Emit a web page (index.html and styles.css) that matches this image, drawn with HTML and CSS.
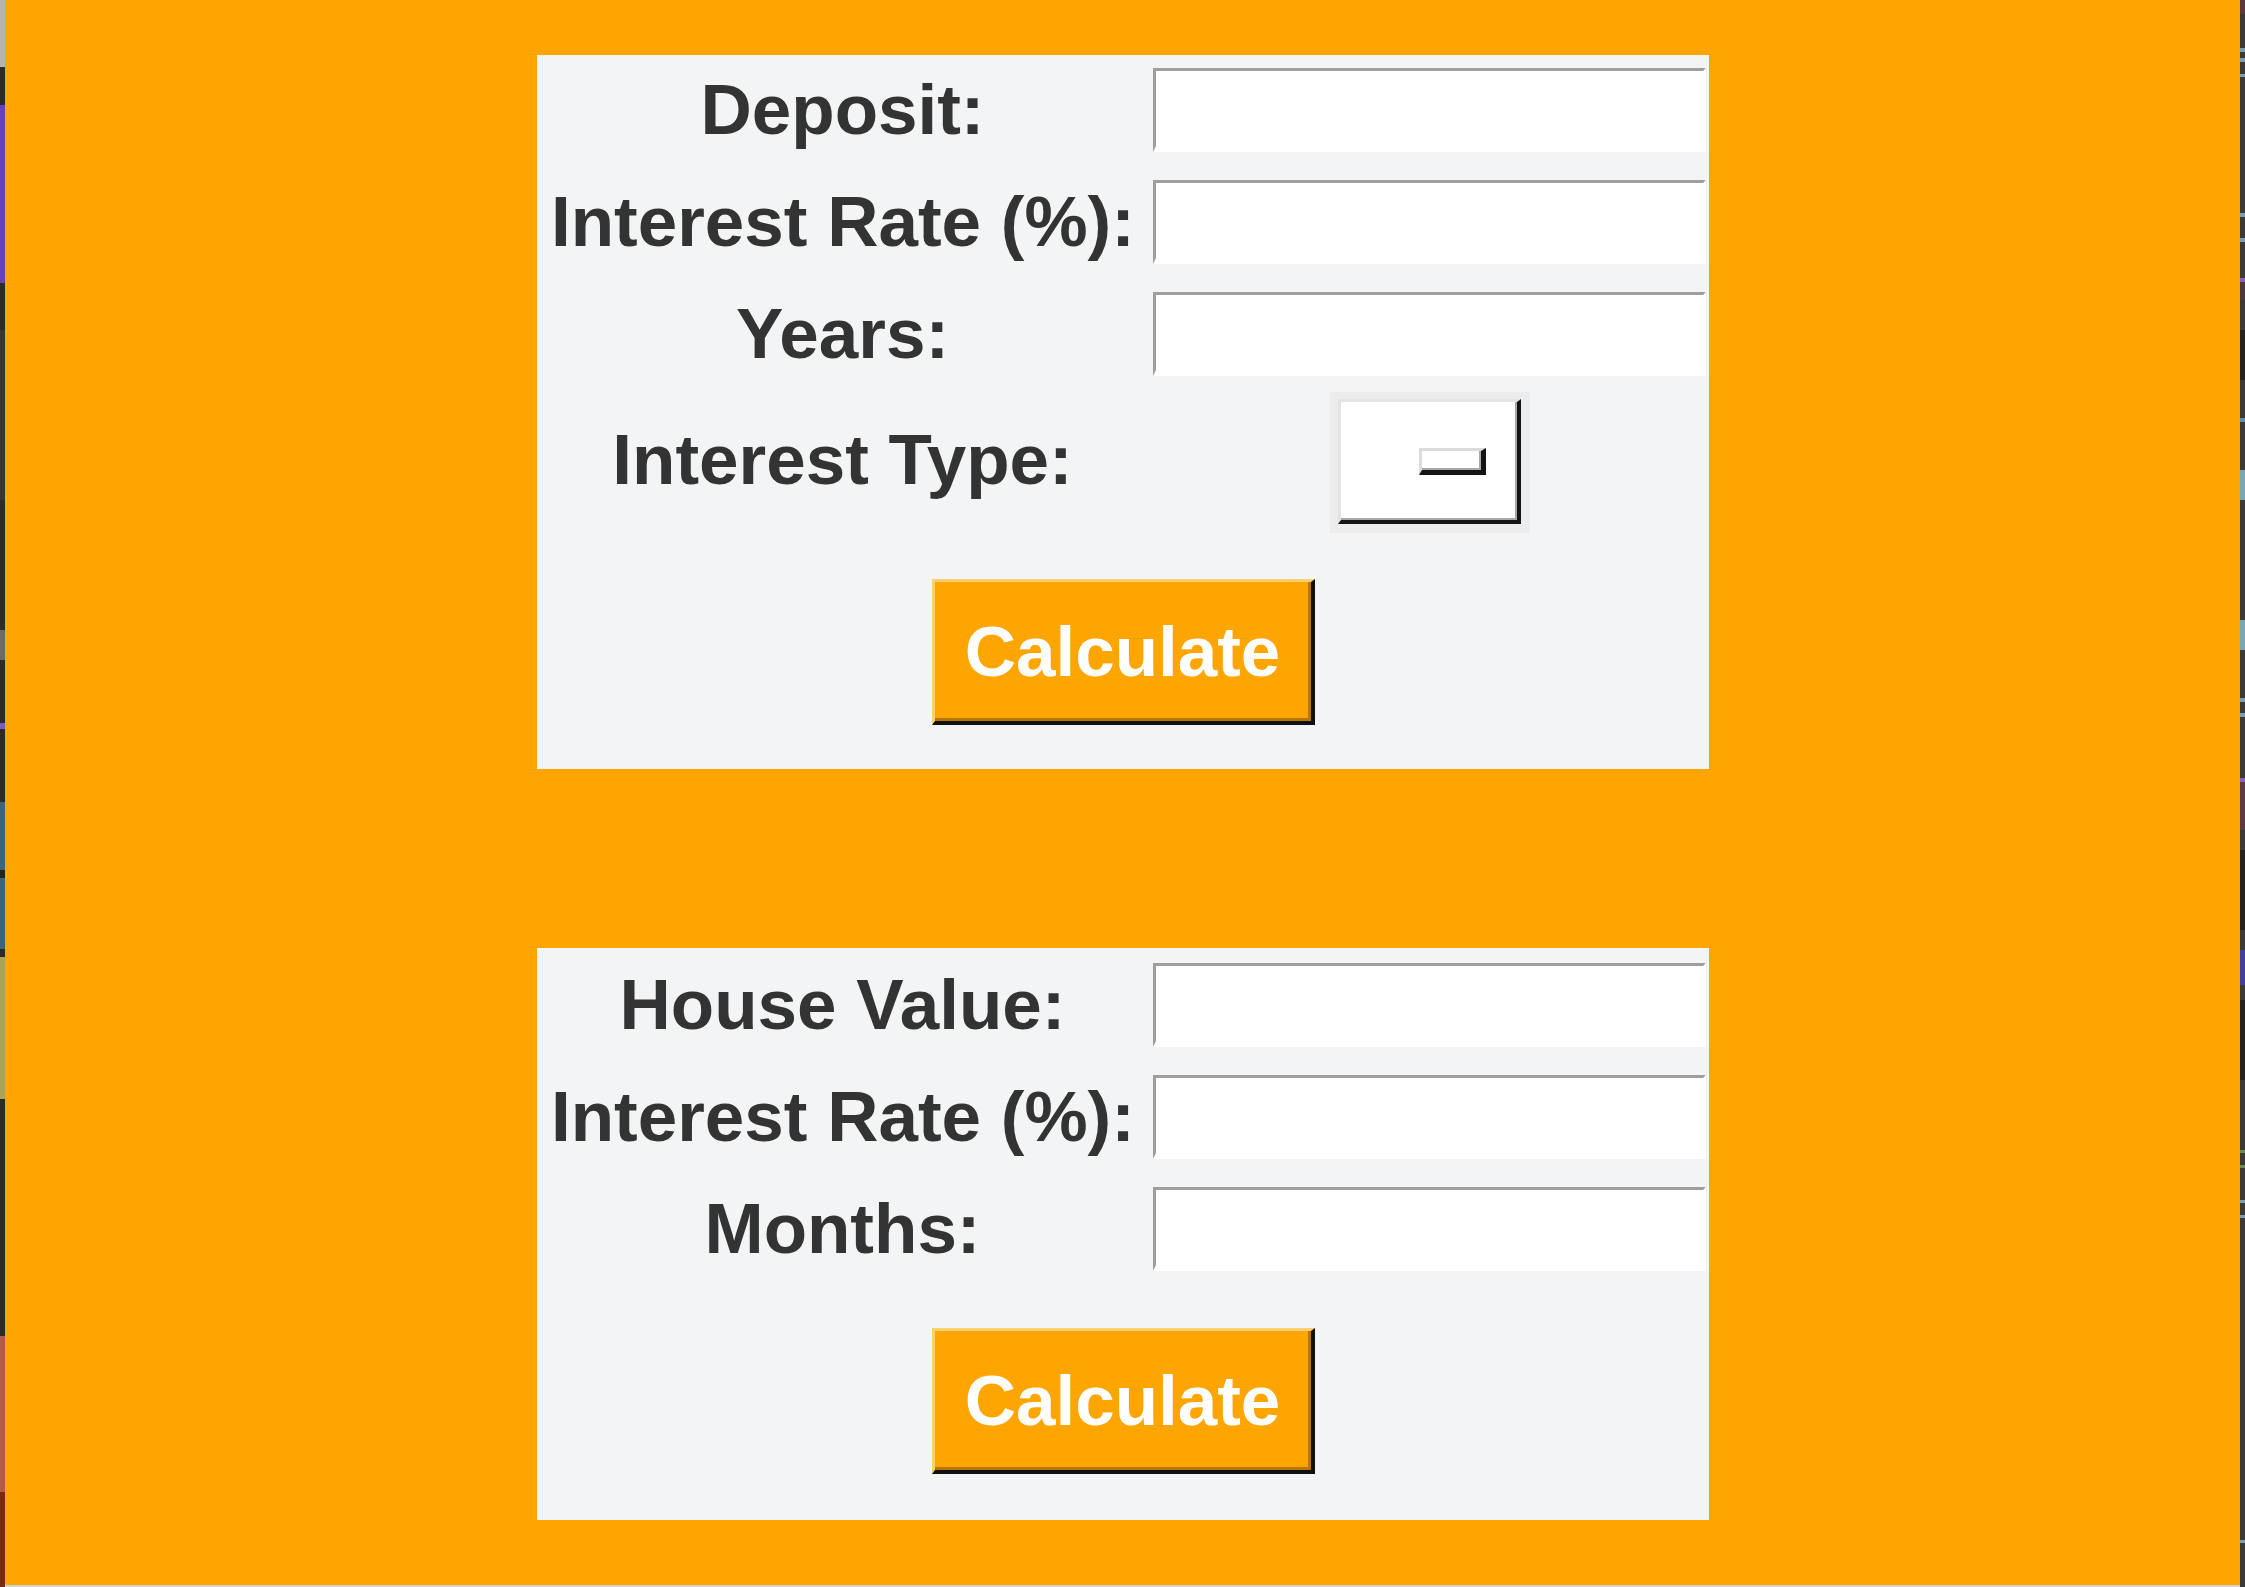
FILE: index.html
```html
<!DOCTYPE html>
<html lang="en">
<head>
<meta charset="utf-8">
<title>Calculator</title>
<link rel="stylesheet" href="styles.css">
</head>
<body>
<div class="window">
  <div class="edge edge-left"></div>
  <main class="content">
    <section class="panel panel-savings">
      <div class="field">
        <label class="label" for="deposit">Deposit:</label>
        <input class="entry" id="deposit" type="text">
      </div>
      <div class="field">
        <label class="label" for="rate1">Interest Rate (%):</label>
        <input class="entry" id="rate1" type="text">
      </div>
      <div class="field">
        <label class="label" for="years">Years:</label>
        <input class="entry" id="years" type="text">
      </div>
      <div class="field field-type">
        <span class="label label-type">Interest Type:</span>
        <div class="option-wrap">
          <div class="option"><span class="indicator"></span></div>
        </div>
      </div>
      <div class="actions">
        <button class="calc" type="button">Calculate</button>
      </div>
    </section>

    <section class="panel panel-mortgage">
      <div class="field">
        <label class="label" for="house">House Value:</label>
        <input class="entry" id="house" type="text">
      </div>
      <div class="field">
        <label class="label" for="rate2">Interest Rate (%):</label>
        <input class="entry" id="rate2" type="text">
      </div>
      <div class="field">
        <label class="label" for="months">Months:</label>
        <input class="entry" id="months" type="text">
      </div>
      <div class="actions">
        <button class="calc" type="button">Calculate</button>
      </div>
    </section>
  </main>
  <div class="edge edge-right"></div>
</div>
</body>
</html>
```

FILE: styles.css
```css
html, body {
  margin: 0;
  padding: 0;
}

body {
  width: 2245px;
  height: 1587px;
  overflow: hidden;
  background: #ffa500;
  font-family: "Liberation Sans", Arial, Helvetica, sans-serif;
}

.window {
  display: flex;
  width: 2245px;
  height: 1587px;
}

.edge {
  width: 5px;
  flex: 0 0 5px;
  height: 1587px;
}

.edge-left {
  background: linear-gradient(to bottom,
    #b4b4b4 0px, #b4b4b4 67px,
    #2b2b2b 67px, #2b2b2b 105px,
    #6b3fb5 105px, #6b3fb5 283px,
    #2b2b2b 283px, #2b2b2b 330px,
    #363636 330px, #363636 500px,
    #2b2b2b 500px, #2b2b2b 630px,
    #6a6a6a 630px, #6a6a6a 660px,
    #2b2b2b 660px, #2b2b2b 723px,
    #7a5fc0 723px, #7a5fc0 729px,
    #2b2b2b 729px, #2b2b2b 802px,
    #3d6383 802px, #3d6383 870px,
    #222222 870px, #222222 878px,
    #3d6383 878px, #3d6383 949px,
    #2b2b2b 949px, #2b2b2b 957px,
    #b0a055 957px, #b0a055 1099px,
    #2b2b2b 1099px, #2b2b2b 1336px,
    #b55a48 1336px, #b55a48 1492px,
    #7a2c12 1492px, #7a2c12 1587px);
}

.edge-right {
  background: linear-gradient(to bottom,
    #5a3a40 0px, #5a3a40 14px,
    #3a3a3a 14px, #3a3a3a 48px,
    #7aa0b8 48px, #7aa0b8 52px,
    #3a3a3a 52px, #3a3a3a 58px,
    #7aa0b8 58px, #7aa0b8 62px,
    #3a3a3a 62px, #3a3a3a 74px,
    #7aa0b8 74px, #7aa0b8 77px,
    #3a3a3a 77px, #3a3a3a 213px,
    #7aa0b8 213px, #7aa0b8 217px,
    #3a3a3a 217px, #3a3a3a 238px,
    #7aa0b8 238px, #7aa0b8 242px,
    #3a3a3a 242px, #3a3a3a 278px,
    #8a60c0 278px, #8a60c0 282px,
    #4a3a40 282px, #4a3a40 300px,
    #3a3a3a 300px, #3a3a3a 330px,
    #222222 330px, #222222 380px,
    #3a3a3a 380px, #3a3a3a 418px,
    #6090b0 418px, #6090b0 422px,
    #3a3a3a 422px, #3a3a3a 470px,
    #78a8b8 470px, #78a8b8 500px,
    #3a3a3a 500px, #3a3a3a 620px,
    #78a8b8 620px, #78a8b8 650px,
    #3a3a3a 650px, #3a3a3a 698px,
    #7aa0b8 698px, #7aa0b8 702px,
    #3a3a3a 702px, #3a3a3a 713px,
    #7aa0b8 713px, #7aa0b8 717px,
    #3a3a3a 717px, #3a3a3a 778px,
    #8a60c0 778px, #8a60c0 782px,
    #5a3a45 782px, #5a3a45 830px,
    #3a3a3a 830px, #3a3a3a 850px,
    #222222 850px, #222222 930px,
    #3a3a3a 930px, #3a3a3a 950px,
    #4040a0 950px, #4040a0 985px,
    #3a3a3a 985px, #3a3a3a 1000px,
    #222222 1000px, #222222 1080px,
    #3a3a3a 1080px, #3a3a3a 1150px,
    #6a8a5a 1150px, #6a8a5a 1153px,
    #3a3a3a 1153px, #3a3a3a 1165px,
    #6a8a5a 1165px, #6a8a5a 1168px,
    #3a3a3a 1168px, #3a3a3a 1200px,
    #7aa0b8 1200px, #7aa0b8 1203px,
    #3a3a3a 1203px, #3a3a3a 1215px,
    #7aa0b8 1215px, #7aa0b8 1218px,
    #3a3a3a 1218px, #3a3a3a 1540px,
    #7aa0b8 1540px, #7aa0b8 1543px,
    #3a3a3a 1543px, #3a3a3a 1587px);
}

.content {
  flex: 1 1 auto;
  display: flex;
  flex-direction: column;
  align-items: flex-start;
  gap: 179px;
  padding: 55px 0 0 532px;
  box-sizing: border-box;
  height: 1587px;
  border-bottom: 2px solid #d4d4d4;
}

.panel {
  width: 1172px;
  box-sizing: border-box;
  background: #f3f4f6;
  overflow: hidden;
  padding-top: 13px;
}

.panel-mortgage {
  padding-top: 15px;
}

.field {
  display: grid;
  grid-template-columns: 583px 553px;
  column-gap: 19px;
  align-items: center;
  height: 84px;
  padding-left: 14px;
}

.field + .field {
  margin-top: 28px;
}

.field.field-type {
  height: 141px;
  margin-top: 16px;
}

.label {
  display: block;
  text-align: center;
  white-space: nowrap;
  font-size: 71px;
  font-weight: bold;
  color: #333333;
  line-height: 82px;
}

.label-type {
  padding-bottom: 6px;
}

.entry {
  display: block;
  width: 553px;
  height: 84px;
  margin: 0;
  padding: 0;
  box-sizing: border-box;
  background: #ffffff;
  border-style: solid;
  border-width: 3px 3px 6px 3px;
  border-color: #9e9e9e #ffffff #ffffff #9e9e9e;
  outline: none;
  font-family: "Liberation Sans", Arial, sans-serif;
  font-size: 40px;
}

.option-wrap {
  justify-self: center;
  width: 200px;
  height: 141px;
  box-sizing: border-box;
  padding: 7px 9px 9px 8px;
  background: #ececec;
}

.option {
  display: flex;
  align-items: center;
  justify-content: flex-end;
  width: 183px;
  height: 125px;
  box-sizing: border-box;
  padding-right: 31px;
  background: #ffffff;
  border-style: solid;
  border-width: 3px 4px 4px 3px;
  border-color: #e4e4e4 #141414 #141414 #e4e4e4;
  box-shadow: inset -2px -2px 0 #a8a8a8;
}

.indicator {
  display: block;
  width: 67px;
  height: 27px;
  box-sizing: border-box;
  background: #ffffff;
  border-style: solid;
  border-width: 3px 5px 5px 3px;
  border-color: #dcdcdc #141414 #141414 #dcdcdc;
  box-shadow: inset -2px -2px 0 #a8a8a8;
}

.actions {
  display: flex;
  justify-content: center;
  margin-top: 46px;
  padding-bottom: 44px;
}

.panel-mortgage .actions {
  margin-top: 57px;
  padding-bottom: 46px;
}

.calc {
  width: 383px;
  height: 146px;
  margin: 0;
  padding: 0;
  box-sizing: border-box;
  background: #ffa500;
  border-style: solid;
  border-width: 3px 4px 4px 3px;
  border-color: #ffd070 #111111 #111111 #ffd070;
  box-shadow: inset -3px -3px 0 #b87800;
  color: #ffffff;
  font-family: "Liberation Sans", Arial, sans-serif;
  font-size: 71px;
  font-weight: bold;
  line-height: 1;
  cursor: pointer;
}
```
